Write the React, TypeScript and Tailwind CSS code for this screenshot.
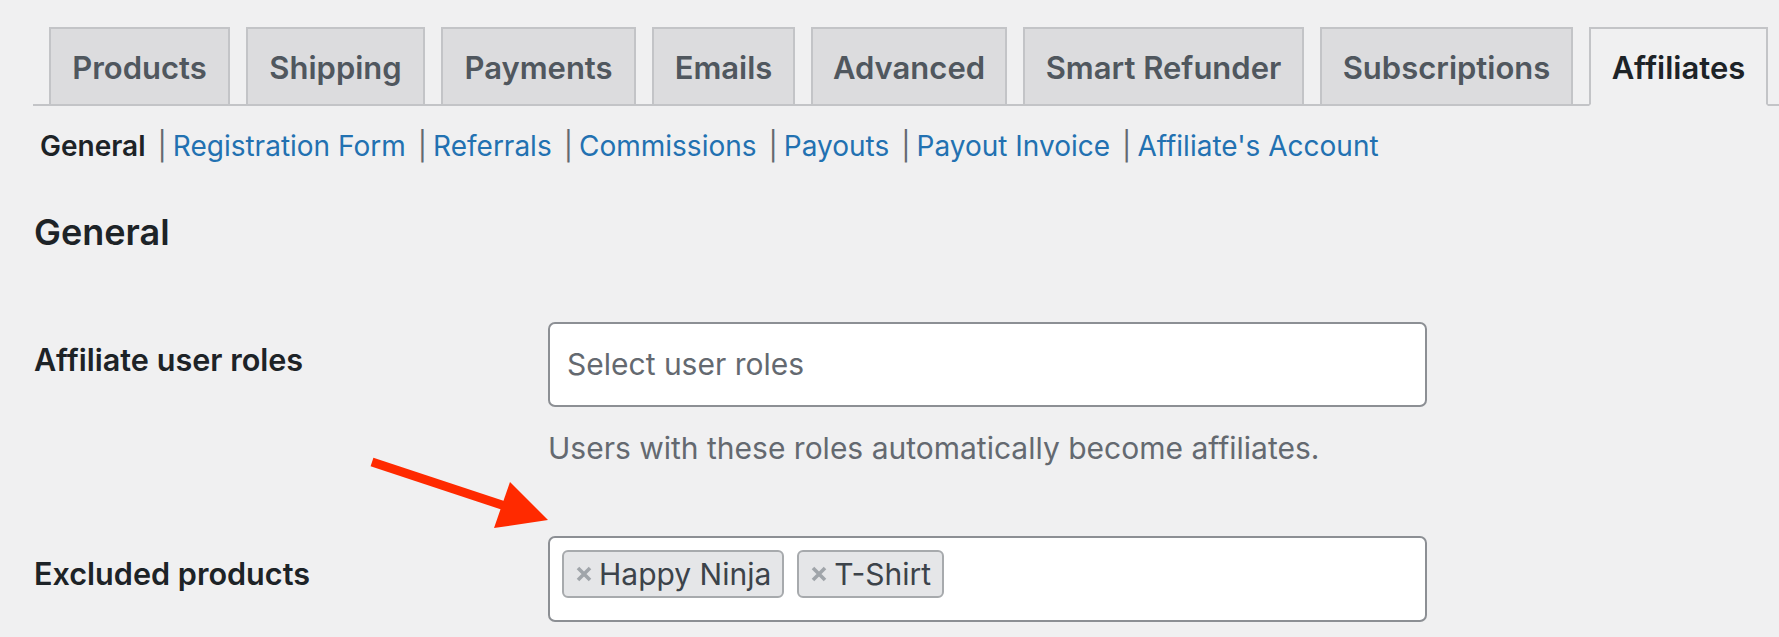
const tabs = [
  { label: "Products", cls: "w-[181px]" },
  { label: "Shipping", cls: "w-[179px]" },
  { label: "Payments", cls: "w-[195px]" },
  { label: "Emails", cls: "w-[143px]" },
  { label: "Advanced", cls: "w-[196px]" },
  { label: "Smart Refunder", cls: "w-[281px]" },
  { label: "Subscriptions", cls: "w-[253px]" },
];

const links = [
  "Registration Form",
  "Referrals",
  "Commissions",
  "Payouts",
  "Payout Invoice",
  "Affiliate's Account",
];

function Sep() {
  return <span className="ml-[12px] mr-[6px] text-[#646970]">|</span>;
}

function Chip({ label }: { label: string }) {
  return (
    <div className="flex h-[48px] items-center rounded-[6px] border-2 border-[#a7aaad] bg-[#e5e6e8] pl-[12px] pr-[11px]">
      <svg width="16" height="16" viewBox="0 0 16 16" className="mr-[7px]">
        <path d="M2 2 L14 14 M14 2 L2 14" stroke="#a0a5aa" strokeWidth="3.6" strokeLinecap="butt" />
      </svg>
      <span className="text-[30px] leading-[36px] text-[#3c434a]">{label}</span>
    </div>
  );
}

export default function App() {
  return (
    <div className="relative h-[637px] w-[1779px] overflow-hidden bg-[#f0f0f1] pl-[33px] pt-[27px] font-[Inter,sans-serif]">
      {/* Tabs */}
      <div className="flex gap-[16px] border-b-2 border-[#c3c4c7] pl-[16px]">
        {tabs.map((t) => (
          <div
            key={t.label}
            className={`${t.cls} -mb-[2px] flex h-[79px] items-center justify-center border-2 border-[#c3c4c7] bg-[#dcdcde] pt-[3px] text-[31px] font-semibold text-[#50575e]`}
          >
            {t.label}
          </div>
        ))}
        <div className="-mb-[2px] flex h-[79px] w-[179px] items-center justify-center border-2 border-[#c3c4c7] border-b-[#f0f0f1] bg-[#f0f0f1] pt-[3px] text-[31px] font-semibold text-[#1d2327]">
          Affiliates
        </div>
      </div>

      {/* Sub navigation */}
      <div className="ml-[7px] mt-[20px] flex h-[40px] items-center text-[28px]">
        <span className="font-semibold text-[#1d2327]">General</span>
        {links.map((l) => (
          <span key={l} className="flex items-center">
            <Sep />
            <span className="text-[#2271b1]">{l}</span>
          </span>
        ))}
      </div>

      {/* Heading */}
      <h2 className="ml-[1px] mt-[44px] text-[36px] font-semibold leading-[44px] text-[#1d2327]">General</h2>

      {/* Row 1 */}
      <div className="ml-[1px] mt-[68px] flex">
        <div className="w-[514px] pt-[20px] text-[30.6px] font-semibold leading-[36px] text-[#1d2327]">
          Affiliate user roles
        </div>
        <div className="w-[879px]">
          <div className="flex h-[85px] items-center rounded-[7px] border-2 border-[#8c8f94] bg-white pl-[17px] text-[30px] text-[#646970]">
            Select user roles
          </div>
          <div className="mt-[23px] text-[30px] leading-[36px] text-[#646970]">
            Users with these roles automatically become affiliates.
          </div>
        </div>
      </div>

      {/* Row 2 */}
      <div className="ml-[1px] mt-[70px] flex">
        <div className="w-[514px] pt-[20px] text-[30.6px] font-semibold leading-[36px] text-[#1d2327]">
          Excluded products
        </div>
        <div className="w-[879px]">
          <div className="flex h-[86px] items-start gap-[13px] rounded-[7px] border-2 border-[#8c8f94] bg-white pl-[12px] pt-[12px]">
            <Chip label="Happy Ninja" />
            <Chip label="T-Shirt" />
          </div>
        </div>
      </div>

      {/* Annotation arrow */}
      <svg className="pointer-events-none absolute left-0 top-0" width="1779" height="637" viewBox="0 0 1779 637">
        <line x1="372" y1="462" x2="505" y2="506" stroke="#ff2a00" strokeWidth="9" />
        <polygon points="510,482 548,520 494,528" fill="#ff2a00" />
      </svg>
    </div>
  );
}
